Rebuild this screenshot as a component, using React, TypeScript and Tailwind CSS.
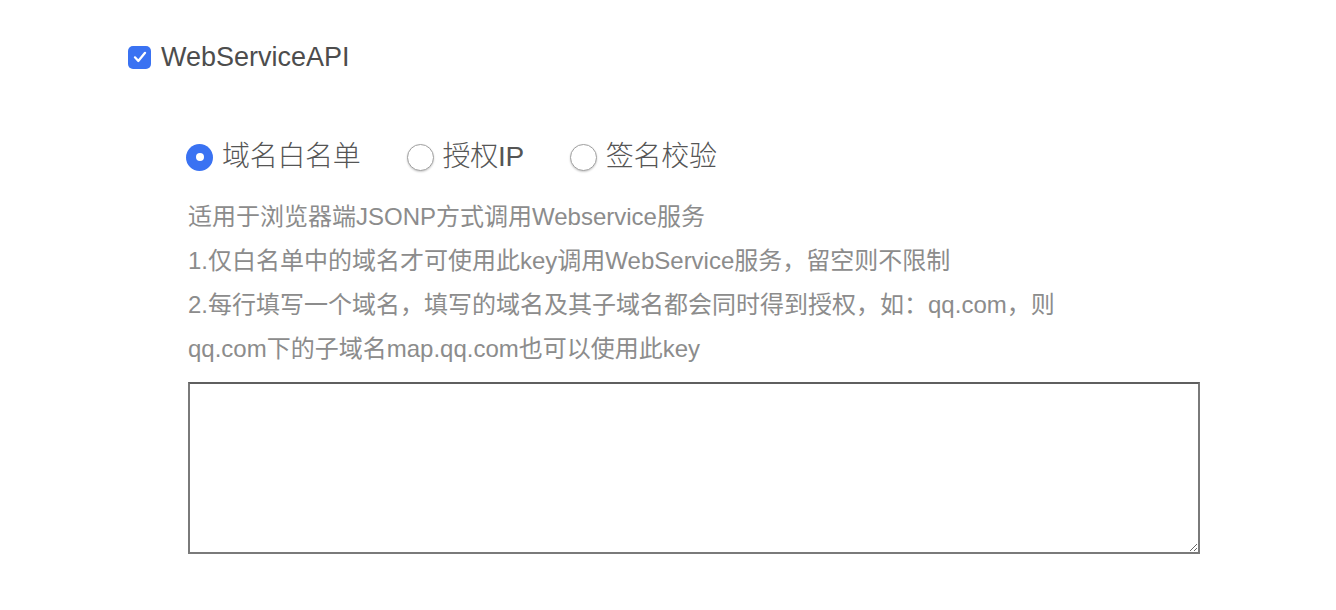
import { FC } from "react";

const font = {
  fontFamily: '"Liberation Sans", "Noto Sans CJK SC", sans-serif',
};

const Radio: FC<{ checked?: boolean; label: string }> = ({ checked, label }) => (
  <label className="flex items-center gap-[9px]">
    {checked ? (
      <span className="flex h-[27px] w-[27px] items-center justify-center rounded-full bg-[#3a72f2]">
        <span className="h-[8px] w-[8px] rounded-full bg-white" />
      </span>
    ) : (
      <span className="h-[27px] w-[27px] rounded-full border border-[#a0a0a0] bg-white shadow-[0_1px_2px_rgba(0,0,0,0.2)]" />
    )}
    <span className="text-[28px] font-light leading-[28px] tracking-[-0.3px] text-[#555]">{label}</span>
  </label>
);

const lines = [
  "适用于浏览器端JSONP方式调用Webservice服务",
  "1.仅白名单中的域名才可使用此key调用WebService服务，留空则不限制",
  "2.每行填写一个域名，填写的域名及其子域名都会同时得到授权，如：qq.com，则",
  "qq.com下的子域名map.qq.com也可以使用此key",
];

export default function App() {
  return (
    <div className="h-[610px] w-[1336px] bg-white" style={font}>
      <div className="pl-[128px] pt-[44px]">
        <div className="flex items-center gap-[10px]">
          <span className="flex h-[23px] w-[23px] items-center justify-center rounded-[5px] bg-[#3a72f2]">
            <svg width="18" height="18" viewBox="0 0 16 16" fill="none">
              <path
                d="M3.5 8.3l3 3.2L12.5 4.3"
                stroke="white"
                strokeWidth="2"
                strokeLinecap="round"
                strokeLinejoin="round"
              />
            </svg>
          </span>
          <span className="text-[27px] font-light leading-[26px] text-[#4d4d4d]">
            WebServiceAPI
          </span>
        </div>

        <div className="pl-[58px] pt-[73px]">
          <div className="flex items-center gap-[46px]">
            <Radio checked label="域名白名单" />
            <Radio label="授权IP" />
            <Radio label="签名校验" />
          </div>

          <div className="pl-[2px] pt-[24px] text-[24px] leading-[44px] text-[#8c8c8c]">
            {lines.map((ln, idx) => (
              <p key={idx} className="whitespace-nowrap">
                {ln}
              </p>
            ))}
          </div>

          <textarea className="mt-[11px] ml-[2px] block h-[172px] w-[1012px] border-2 border-[#7a7a7a] border-t-[#5f5f5f] bg-white" />
        </div>
      </div>
    </div>
  );
}
